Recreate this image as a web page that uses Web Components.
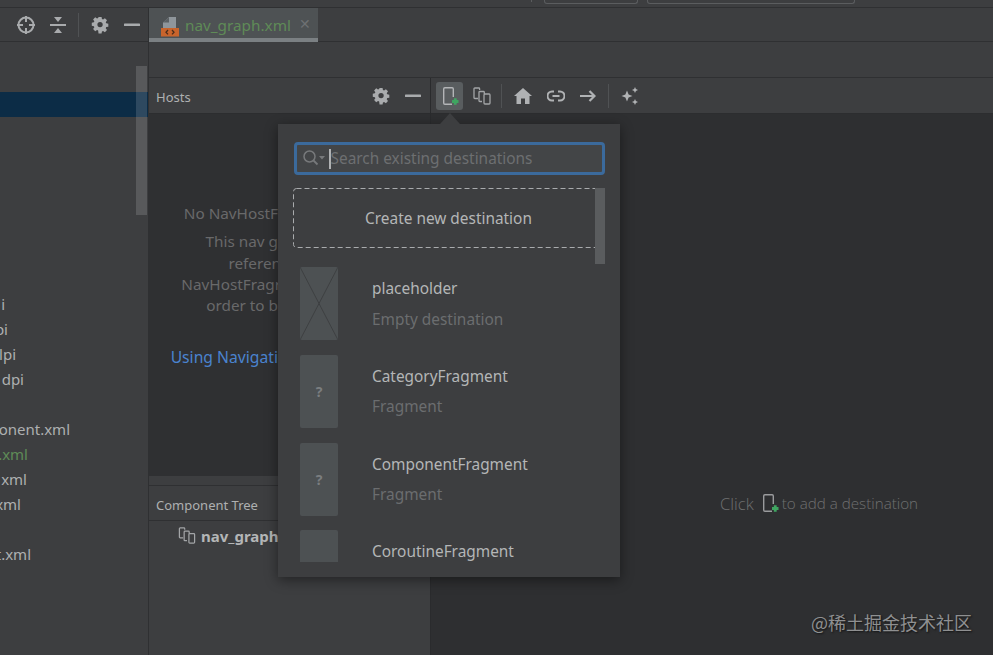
<!DOCTYPE html>
<html><head><meta charset="utf-8">
<style>
html,body{margin:0;padding:0;height:100%;overflow:hidden;background:#3d3e40;font-family:"Noto Sans","Open Sans",sans-serif}
</style></head><body>
<ide-window></ide-window>
<script>
const COPY='<path d="M6 12.500H2.800a.8.8 0 0 1-.8-.8V2.800A.8.8 0 0 1 2.800 2h4a.8.8 0 0 1 .8.8V4"/><path d="M10 15.500H7.800a.8.8 0 0 1-.8-.8V6.300a.8.8 0 0 1 .8-.8h3.700a.8.8 0 0 1 .8.8V8"/><rect x="12" y="8" width="6" height="10" rx=".9"/>';
const ICONS={
gear:'<svg width="18" height="18" viewBox="0 0 18 18"><path fill="#a9abad" fill-rule="evenodd" d="M7.400 1h3.200l.4 2.200 1.200.5 1.900-1.300 2.200 2.200-1.300 1.900.5 1.200 2.200.4v3.200l-2.200.4-.5 1.200 1.300 1.900-2.200 2.200-1.900-1.300-1.200.5-.4 2.200H7.400L7 15.200l-1.200-.5-1.900 1.300-2.200-2.200L3 11.900l-.5-1.200-2.200-.4V7.100l2.200-.4.5-1.200-1.300-1.900 2.200-2.200 1.900 1.300L7 2.200zM9 6.200a2.800 2.800 0 1 0 0 5.600 2.800 2.800 0 0 0 0-5.600z" transform="translate(0.500 0) scale(.95)"/></svg>',
minus:'<svg width="16" height="4" viewBox="0 0 16 4"><rect y="0.500" width="16" height="2.600" rx=".6" fill="#a9abad"/></svg>',
locate:'<svg width="20" height="20" viewBox="0 0 20 20" fill="none" stroke="#a9abad" stroke-width="2"><circle cx="10" cy="10" r="7.500"/><path d="M10 1v6M10 13v6M1 10h6M13 10h6"/></svg>',
collapse:'<svg width="16" height="18" viewBox="0 0 16 18" fill="#a9abad"><rect y="8" width="16" height="2"/><path d="M4 1h8L8 6zM4 17h8l-4-5z"/></svg>',
file:'<svg width="20" height="21" viewBox="0 0 20 21"><path d="M3 6.500 9 1h7v11H3z" fill="#8f969b"/><path d="M9 1v5.500H3z" fill="#5b6063"/><rect x="1" y="12" width="18" height="8.500" fill="#c8642c"/><path d="M8 14l-2 2.200 2 2.200M12 14l2 2.200-2 2.200" stroke="#4a2d1c" stroke-width="1.300" fill="none"/></svg>',
add:'<svg width="20" height="22" viewBox="0 0 20 22" fill="none"><rect x="2.700" y="2.700" width="9.600" height="16.600" rx="1.200" stroke="#b3b5b7" stroke-width="1.400"/><path d="M11 12h6v8h-6z" fill="#595d5f"/><path d="M11 16.500h6.500M14.250 13.200v6.600" stroke="#3fa561" stroke-width="2.800"/></svg>',
addDark:'<svg width="20" height="22" viewBox="0 0 20 22" fill="none"><rect x="3.700" y="2.700" width="9.600" height="16.600" rx="1.200" stroke="#9a9b9d" stroke-width="1.400"/><path d="M12 12h6v8h-6z" fill="#2e2f31"/><path d="M12 16.500h6.500M15.250 13.200v6.600" stroke="#3fa561" stroke-width="2.800"/></svg>',
copy:'<svg width="20" height="20" viewBox="0 0 20 20" fill="none" stroke="#a3a5a7" stroke-width="1.300">'+COPY+'</svg>',
home:'<svg width="18" height="16" viewBox="0 0 18 16"><path fill="#b0b2b4" d="M9 0 18 8h-2.500v8H11V10.500H7V16H2.500V8H0z"/></svg>',
link:'<svg width="18" height="12" viewBox="0 0 18 12" fill="none" stroke="#b0b2b4" stroke-width="2"><path d="M7 1.500H5a4.500 4.500 0 0 0 0 9h2M11 1.500h2a4.500 4.500 0 0 1 0 9h-2M5.500 6h7"/></svg>',
arrow:'<svg width="16" height="12" viewBox="0 0 16 12" fill="none" stroke="#b0b2b4" stroke-width="2.200"><path d="M0 6h14M9.500 1l5 5-5 5"/></svg>',
spark:'<svg width="20" height="20" viewBox="0 0 20 20" fill="#b0b2b4"><path d="M7 4.500 8.600 8.400 12.500 10 8.600 11.600 7 15.500 5.400 11.600 1.500 10 5.400 8.400zM15 1l.9 2.100L18 4l-2.100.9L15 7l-.9-2.100L12 4l2.100-.9zM15 13l.9 2.100L18 16l-2.100.9L15 19l-.9-2.100L12 16l2.100-.9z"/></svg>',
tree:'<svg width="20" height="19" viewBox="0 0 20 20" fill="none" stroke="#a3a5a7" stroke-width="1.300">'+COPY+'</svg>',
search:'<svg width="24" height="18" viewBox="0 0 24 18" fill="none"><circle cx="7.500" cy="7.500" r="5.500" stroke="#77797b" stroke-width="1.500"/><path d="M11.500 11.500l4 4" stroke="#77797b" stroke-width="1.800"/><path d="M17 7h6l-3 3.500z" fill="#77797b"/></svg>'
};
function def(name,css,html,init){
  const t=document.createElement('template');
  t.innerHTML=`<style>${css}</style>${html}`;
  customElements.define(name,class extends HTMLElement{
    constructor(){super();this.attachShadow({mode:'open'}).appendChild(t.content.cloneNode(true));}
    connectedCallback(){init&&init.call(this,this.shadowRoot)}
  });
}
def('ide-icon',':host{display:inline-flex;align-items:center;justify-content:center;flex:none}','<span style="display:contents"></span>',function(r){r.querySelector('span').innerHTML=ICONS[this.getAttribute('name')]||''});
def('tool-btn',':host{display:flex;align-items:center;justify-content:center;height:28px;flex:none;border-radius:3px}:host([on]){background:#595d5f;padding-left:3px;box-sizing:border-box}','<slot></slot>',function(){const w=this.getAttribute('w');if(w)this.style.width=w+'px';});
def('tool-sep',':host{display:block;width:1px;height:24px;background:#505254;flex:none}','');
def('tree-row',':host{display:flex;justify-content:flex-end;height:25px;line-height:25px;overflow:hidden;white-space:nowrap;font-size:15px;color:#aeb0b1}:host([g]){color:#5f8b57}','<slot></slot>',function(){this.style.width=this.getAttribute('end')+'px'});

def('top-strip',`:host{display:flex;height:7px;border-bottom:1px solid #2f3032;background:#3d3e40;box-sizing:content-box;overflow:hidden}
 i{display:block;height:3px;border:1px solid #5b5d5f;border-top:0;border-radius:0 0 3px 3px;box-sizing:content-box;flex:none}
 u{display:block;width:1px;height:2px;background:#5b5d5f;margin-left:531px;flex:none}`,
 `<u></u><i style="margin-left:12px;width:92px"></i><i style="margin-left:9px;width:206px"></i>`);

def('project-pane',`:host{display:block;position:relative;width:148px;flex:none;background:#3d3e40;border-right:1px solid #2f3032;overflow:hidden}
 .head{height:33px;display:flex;align-items:center;justify-content:flex-end;border-bottom:1px solid #2f3032;padding-right:5px}
 .sel{height:25px;margin-top:50px;background:#0c2c46}
 .list{margin-top:175px}
 .gap{height:25px}
 .bar{position:absolute;left:136px;top:58px;width:11px;height:149px;background:rgba(255,255,255,.14)}`,
 `<div class="head">
   <tool-btn w="24"><ide-icon name="locate"></ide-icon></tool-btn>
   <tool-btn w="40"><ide-icon name="collapse"></ide-icon></tool-btn>
   <tool-sep></tool-sep>
   <tool-btn w="42"><ide-icon name="gear"></ide-icon></tool-btn>
   <tool-btn w="22"><ide-icon name="minus"></ide-icon></tool-btn>
 </div>
 <div class="sel"></div>
 <div class="list">
  <tree-row end="5">i</tree-row><tree-row end="8">pi</tree-row><tree-row end="16">lpi</tree-row><tree-row end="24">dpi</tree-row>
  <div class="gap"></div>
  <tree-row end="70">onent.xml</tree-row><tree-row end="28" g>.xml</tree-row><tree-row end="27">xml</tree-row><tree-row end="21">xml</tree-row>
  <div class="gap"></div>
  <tree-row end="31">t.xml</tree-row>
 </div>
 <div class="bar"></div>`);

def('file-tab',`:host{display:flex;align-items:center;width:169px;height:34px;background:#4e5254;border-bottom:4px solid #7b8083;box-sizing:border-box;flex:none;padding:3px 0 0 11px}
 ide-icon{margin-top:3px}
 span{font-size:15.300px;color:#5f8b57;margin-left:5px;white-space:nowrap}
 b{font:400 14px "Noto Sans",sans-serif;color:#6d7072;margin-left:8px;margin-top:-2px}`,
 `<ide-icon name="file"></ide-icon><span>nav_graph.xml</span><b>✕</b>`);

def('hosts-pane',`:host{display:flex;flex-direction:column;width:281px;flex:none;background:#3d3e40}
 .hd{height:35px;display:flex;align-items:center;font-size:13px;color:#aeb0b1;padding-left:7px;border-bottom:1px solid #2c2d2f;flex:none}
 .hd span{flex:1;padding-top:2px}
 .body{height:362px;background:#2f3032;flex:none;box-sizing:border-box;padding-top:89px;white-space:nowrap}
 .clip{width:129px;height:250px}
 .in{text-align:right;font-size:15.300px;color:#69696a;line-height:21.300px}
 .in p{margin:0}
 .in .o{margin-right:-3px}
 .title{margin-bottom:7px!important}
 a{display:block;color:#4a83cf;font-size:15.700px;margin:31px 0 0;text-align:right;text-decoration:none}
 .split{height:9px;flex:none;border-bottom:1px solid #2f3032}
 .ct{height:35px;display:flex;align-items:center;font-size:13px;color:#aeb0b1;padding:3px 0 0 7px;border-bottom:1px solid #2f3032;flex:none;box-sizing:border-box}
 .row{display:flex;align-items:center;height:29px;padding-left:28px;font-size:15px;font-weight:700;color:#b4b6b7;white-space:nowrap;gap:4px}`,
 `<div class="hd"><span>Hosts</span>
   <tool-btn w="32"><ide-icon name="gear"></ide-icon></tool-btn>
   <tool-btn w="32"><ide-icon name="minus"></ide-icon></tool-btn>
   <span style="flex:none;width:1px;padding:0"></span></div>
 <div class="body"><div class="clip"><div class="in">
   <p class="title">No NavHostF</p>
   <p>This nav g</p><p class="o">referen</p><p class="o">NavHostFragr</p><p>order to b</p>
   <a>Using Navigati</a>
 </div></div></div>
 <div class="split"></div>
 <div class="ct">Component Tree</div>
 <div class="row"><ide-icon name="tree"></ide-icon>nav_graph</div>`);

def('design-pane',`:host{display:flex;flex-direction:column;flex:1;min-width:0;background:#2e2f31;border-left:1px solid #2a2b2d}
 .tb{height:35px;display:flex;align-items:center;padding-left:5px;background:#3d3e40;border-bottom:1px solid #2c2d2f;flex:none}
 .hint{display:flex;align-items:center;margin:379px 0 0 289px;font-size:15.200px;font-weight:300;color:#6e6f70;white-space:nowrap;height:20px;font-family:"Open Sans","Noto Sans",sans-serif}
 .hint b{font-weight:300;font-size:16.600px;margin-right:5px}
 .hint ide-icon{margin-left:1px;margin-right:2px}`,
 `<div class="tb">
   <tool-btn w="27" on><ide-icon name="add"></ide-icon></tool-btn>
   <tool-btn w="38"><ide-icon name="copy"></ide-icon></tool-btn>
   <tool-sep></tool-sep>
   <tool-btn w="42"><ide-icon name="home"></ide-icon></tool-btn>
   <tool-btn w="24"><ide-icon name="link"></ide-icon></tool-btn>
   <tool-btn w="40"><ide-icon name="arrow"></ide-icon></tool-btn>
   <tool-sep></tool-sep>
   <tool-btn w="42"><ide-icon name="spark"></ide-icon></tool-btn>
 </div>
 <div class="hint"><b>Click</b><ide-icon name="addDark"></ide-icon>to add a destination</div>`);

def('dest-item',`:host{display:flex;height:87.800px;flex:none;box-sizing:border-box}
 .th{width:38px;height:73px;background:#4d5153;border-radius:2px;flex:none;display:flex;align-items:center;justify-content:center;color:#7b7e80;font:700 14px "Noto Sans",sans-serif;margin-left:22px;overflow:hidden}
 .tx{margin-left:34px;padding-top:12px;white-space:nowrap}
 .n{font-size:15.400px;color:#b4b6b7;line-height:20px}
 .s{font-size:15.400px;color:#6b6d6f;line-height:20px;margin-top:10.500px}`,
 `<div class="th"><slot name="thumb"></slot></div><div class="tx"><div class="n"></div><div class="s"></div></div>`,
 function(r){r.querySelector('.n').textContent=this.getAttribute('name');
   const s=r.querySelector('.s');s.textContent=this.getAttribute('sub')||'';});

def('dest-popup',`:host{display:block;position:absolute;left:278px;top:124px;width:342px;height:453px;background:#3d3e40;box-shadow:0 3px 12px rgba(0,0,0,.45);box-sizing:border-box;padding:18px 15px 15px 16px;font-size:15.400px}
 .arrow{position:absolute;left:162px;top:-11px;width:0;height:0;border:10px solid transparent;border-top:0;border-bottom:11px solid #3d3e40}
 .search{height:33px;border:3px solid #3b6a9c;border-radius:4px;box-sizing:border-box;display:flex;align-items:center;background:#434547;padding:0 0 1px 5px;color:#6d6f71;white-space:nowrap}
 .caret{width:1.500px;height:20px;background:#b0b2b4;margin:1px 0 0 3px;flex:none}
 .create{height:60px;margin-top:13px;display:flex;align-items:center;justify-content:center;color:#b4b6b7;box-sizing:border-box;margin-left:-1px;margin-right:1px;position:relative}
 .create svg{position:absolute;left:0;top:0}
 .list{margin:19px -15px 0 -16px;height:295px;overflow:hidden}
 .bar{position:absolute;left:317px;top:64px;width:10px;height:76px;background:#5a5c5e}`,
 `<div class="arrow"></div>
 <div class="search"><ide-icon name="search"></ide-icon><div class="caret"></div><span>Search existing destinations</span></div>
 <div class="create"><svg width="311" height="60" viewBox="0 0 311 60" fill="none"><rect x=".5" y=".5" width="310" height="59" rx="3" stroke="#a9abad" stroke-dasharray="5 3"/></svg>Create new destination</div>
 <div class="list">
  <dest-item name="placeholder" sub="Empty destination"><svg slot="thumb" width="38" height="73" viewBox="0 0 38 73" style="display:block"><path d="M0 0 38 73M38 0 0 73" stroke="#3e4042" stroke-width="1" fill="none"/></svg></dest-item>
  <dest-item name="CategoryFragment" sub="Fragment"><span slot="thumb">?</span></dest-item>
  <dest-item name="ComponentFragment" sub="Fragment"><span slot="thumb">?</span></dest-item>
  <dest-item name="CoroutineFragment"></dest-item>
 </div>
 <div class="bar"></div>`);

def('ide-window',`:host{display:flex;flex-direction:column;height:655px;position:relative;overflow:hidden;color:#aaa}
 .main{display:flex;flex:1;min-height:0}
 .right{display:flex;flex-direction:column;flex:1;min-width:0}
 .tabs{height:33px;border-bottom:1px solid #2f3032;flex:none;display:flex;box-sizing:content-box}
 .bar2{height:36px;border-bottom:1px solid #2f3032;flex:none;box-sizing:border-box}
 .work{display:flex;flex:1;min-height:0}
 .wm{position:absolute;right:21px;bottom:20px;font:18px "Noto Sans CJK SC","Noto Sans",sans-serif;color:#8f9091;text-shadow:1px 1px 2px rgba(0,0,0,.65);white-space:nowrap}`,
 `<top-strip></top-strip>
 <div class="main">
  <project-pane></project-pane>
  <div class="right">
   <div class="tabs"><file-tab></file-tab></div>
   <div class="bar2"></div>
   <div class="work"><hosts-pane></hosts-pane><design-pane></design-pane></div>
  </div>
 </div>
 <dest-popup></dest-popup>
 <div class="wm">@稀土掘金技术社区</div>`);
</script>
</body></html>
